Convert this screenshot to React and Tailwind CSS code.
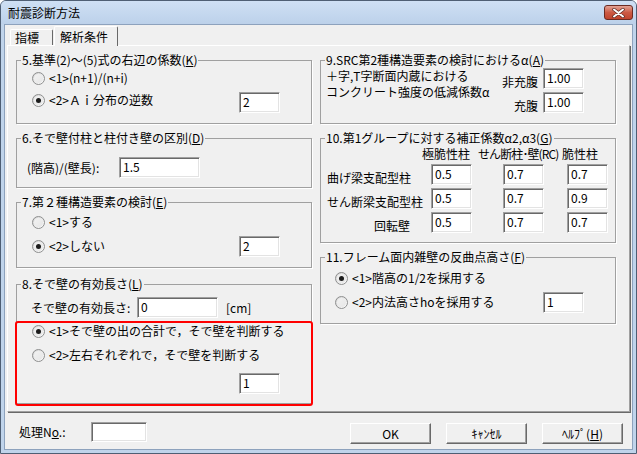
import React from "react";

const Input = ({ v, className = "" }) => (
  <div
    className={`h-[21px] shrink-0 bg-white border border-[#a0a0a0] border-r-white border-b-white shadow-[inset_1px_1px_0_#696969,inset_-1px_-1px_0_#e3e3e3] pl-[3px] pt-[1px] text-[12px] leading-[16px] text-black ${className}`}>
    {v}
  </div>
);

const Radio = ({ on }) => (
  <span className="w-[13px] h-[13px] shrink-0 rounded-full border border-[#8e8f8f] bg-gradient-to-br from-[#d4d4d4] to-white flex items-center justify-center">
    <span className="w-[9px] h-[9px] rounded-full bg-gradient-to-br from-[#f2f2f2] to-[#e6e6e6] flex items-center justify-center">
      {on && <span className="w-[5px] h-[5px] rounded-full bg-[#1c1c1c]" />}
    </span>
  </span>
);

const Group = ({ title, className = "", children }) => (
  <fieldset
    className={`border border-[#a0a0a0] shadow-[1px_1px_0_#fff] ${className}`}>
    <legend className="ml-[4px] px-[1px] leading-[14px] text-[12px]">{title}</legend>
    {children}
  </fieldset>
);

const Btn = ({ children }) => (
  <div className="w-[81px] h-[21px] mt-[1px] border border-white border-r-[#696969] border-b-[#696969] shadow-[inset_-1px_-1px_0_#a0a0a0] bg-[#f0f0f0] flex items-center justify-center text-[12px] leading-[14px]">
    {children}
  </div>
);

export default function App() {
  return (
    <div className="relative w-[637px] h-[454px] flex flex-col bg-[#c0d4eb] border border-[#4f5f74] rounded-t-[6px] overflow-hidden font-['Noto_Sans_CJK_JP','Liberation_Sans',sans-serif] text-[12px] text-black">
      {/* title bar */}
      <div className="h-[23px] flex items-start bg-gradient-to-b from-[#cfe0f4] to-[#bcd1ea]">
        <span className="pl-[7px] leading-[23px]">耐震診断方法</span>
        <div className="ml-auto mt-[4px] mr-[3px] w-[29px] h-[15px] rounded-[3px] border border-[#6b2b22] bg-gradient-to-b from-[#e2a294] via-[#cc5a44] to-[#c0442d] flex items-center justify-center">
          <svg width="13" height="10" viewBox="0 0 13 10">
            <path d="M2 1.5L11 8.5M11 1.5L2 8.5" stroke="#5a2a24" strokeWidth="3.4" strokeLinecap="round" />
            <path d="M2 1.5L11 8.5M11 1.5L2 8.5" stroke="#fff" strokeWidth="2" strokeLinecap="round" />
          </svg>
        </div>
      </div>

      {/* client */}
      <div className="mx-[3px] mb-[3px] flex-1 border border-[#8da2bd] bg-[#f0f0f0] flex flex-col">
        {/* tabs */}
        <div className="h-[21px] flex items-end pl-[5px]">
          <div className="h-[16px] mb-[1px] w-[43px] border-l border-t border-white border-r border-r-[#696969] rounded-t-[2px] pl-[4px] flex items-center leading-[14px]">
            指標
          </div>
          <div className="relative z-10 h-[20px] w-[64px] ml-[1px] bg-[#f0f0f0] border-l border-t border-white border-r border-r-[#696969] rounded-t-[2px] pl-[5px] flex items-center leading-[14px]">
            解析条件
          </div>
        </div>

        {/* panel */}
        <div className="ml-[2px] -mt-[1px] w-[623px] h-[367px] border border-white border-r-[#a0a0a0] border-b-[#a0a0a0] shadow-[1px_1px_0_#696969] pl-[8px] pt-[7px] flex gap-[8px]">
          {/* left column */}
          <div className="w-[296px] flex flex-col">
            <Group className="h-[71px]" title={<>5.基準(2)～(5)式の右辺の係数(<u>K</u>)</>}>
              <div className="h-[22px] flex items-center pl-[15px] gap-[4px]">
                <Radio />
                <span>{"<1>(n+1)/(n+i)"}</span>
              </div>
              <div className="h-[22px] flex items-center pl-[15px] gap-[4px]">
                <Radio on />
                <span>{"<2>Ａｉ分布の逆数"}</span>
                <Input v="2" className="w-[41px] ml-auto mr-[31px] self-start mt-[3px]" />
              </div>
            </Group>

            <Group className="h-[57px] mt-[7px]" title={<>6.そで壁付柱と柱付き壁の区別(<u>D</u>)</>}>
              <div className="mt-[12px] flex items-center pl-[10px]">
                <span className="w-[92px]">(階高)/(壁長):</span>
                <Input v="1.5" className="w-[81px]" />
              </div>
            </Group>

            <Group className="h-[73px] mt-[7px]" title={<>7.第２種構造要素の検討(<u>E</u>)</>}>
              <div className="mt-[2px] h-[22px] flex items-center pl-[15px] gap-[4px]">
                <Radio />
                <span>{"<1>する"}</span>
              </div>
              <div className="mt-[2px] h-[22px] flex items-center pl-[15px] gap-[4px]">
                <Radio on />
                <span>{"<2>しない"}</span>
                <Input v="2" className="w-[41px] ml-auto mr-[31px]" />
              </div>
            </Group>

            <Group className="h-[127px] mt-[9px]" title={<>8.そで壁の有効長さ(<u>L</u>)</>}>
              <div className="mt-[6px] h-[21px] flex items-center pl-[14px]">
                <span className="w-[106px]">そで壁の有効長さ:</span>
                <Input v="0" className="w-[81px]" />
                <span className="ml-[8px]">[cm]</span>
              </div>
              <div className="mt-[2px] h-[22px] flex items-center pl-[15px] gap-[4px]">
                <Radio on />
                <span>{"<1>そで壁の出の合計で，そで壁を判断する"}</span>
              </div>
              <div className="mt-[2px] h-[22px] flex items-center pl-[15px] gap-[4px]">
                <Radio />
                <span>{"<2>左右それぞれで，そで壁を判断する"}</span>
              </div>
              <div className="mt-[7px] flex">
                <Input v="1" className="w-[41px] ml-auto mr-[31px]" />
              </div>
            </Group>
          </div>

          {/* right column */}
          <div className="w-[296px] flex flex-col">
            <Group className="h-[71px]" title={<>9.SRC第2種構造要素の検討におけるα(<u>A</u>)</>}>
              <div className="flex">
                <div className="pl-[5px] pt-[1px] leading-[16px]">
                  <div>＋字,T字断面内蔵における</div>
                  <div>コンクリート強度の低減係数α</div>
                </div>
                <div className="ml-auto mr-[31px] flex flex-col">
                  <div className="mt-[1px] flex items-end justify-end gap-[5px]">
                    <span className="leading-[14px]">非充腹</span>
                    <Input v="1.00" className="w-[41px]" />
                  </div>
                  <div className="mt-[3px] flex items-end justify-end gap-[5px]">
                    <span className="leading-[14px]">充腹</span>
                    <Input v="1.00" className="w-[41px]" />
                  </div>
                </div>
              </div>
            </Group>

            <Group className="h-[112px] mt-[7px]" title={<>10.第1グループに対する補正係数α2,α3(<u>G</u>)</>}>
              <div className="h-[16px] mt-[1px] flex leading-[15px] whitespace-nowrap">
                <span className="ml-[101px] w-[56px]">極脆性柱</span>
                <span className="w-[84px] tracking-[-0.9px]">せん断柱･壁(RC)</span>
                <span>脆性柱</span>
              </div>
              <div className="mt-[2px] flex flex-col gap-[3px]">
                {[
                  ["曲げ梁支配型柱", "0.5", "0.7", "0.7", ""],
                  ["せん断梁支配型柱", "0.5", "0.7", "0.9", ""],
                  ["回転壁", "0.5", "0.7", "0.7", "r"],
                ].map((r) => (
                  <div key={r[0]} className="h-[21px] flex items-end pl-[6px]">
                    <span
                      className={
                        r[4] ? "w-[104px] leading-[14px] text-right pr-[21px]" : "w-[104px] leading-[14px] whitespace-nowrap"
                      }>
                      {r[0]}
                    </span>
                    <Input v={r[1]} className="w-[41px]" />
                    <Input v={r[2]} className="w-[41px] ml-[31px]" />
                    <Input v={r[3]} className="w-[41px] ml-[23px]" />
                  </div>
                ))}
              </div>
            </Group>

            <Group className="h-[74px] mt-[7px]" title={<>11.フレーム面内雑壁の反曲点高さ(<u>F</u>)</>}>
              <div className="mt-[3px] h-[22px] flex items-center pl-[14px] gap-[4px]">
                <Radio on />
                <span>{"<1>階高の1/2を採用する"}</span>
              </div>
              <div className="mt-[2px] h-[22px] flex items-center pl-[14px] gap-[4px]">
                <Radio />
                <span>{"<2>内法高さhoを採用する"}</span>
                <Input v="1" className="w-[41px] ml-auto mr-[31px]" />
              </div>
            </Group>
          </div>
        </div>

        {/* bottom row */}
        <div className="mt-[10px] flex items-start pl-[14px]">
          <span className="w-[72px] h-[20px] leading-[20px]">
            処理N<u>o</u>.:
          </span>
          <Input v="" className="w-[56px] !h-[20px]" />
          <div className="ml-[203px] flex gap-[15px]">
            <Btn>OK</Btn>
            <Btn>ｷｬﾝｾﾙ</Btn>
            <Btn>
              ﾍﾙﾌﾟ(<u>H</u>)
            </Btn>
          </div>
        </div>
      </div>

      {/* red highlight annotation */}
      <div className="absolute left-[14px] top-[320px] w-[298px] h-[85px] border-2 border-[#ff0000] rounded-[3px] pointer-events-none" />
    </div>
  );
}
